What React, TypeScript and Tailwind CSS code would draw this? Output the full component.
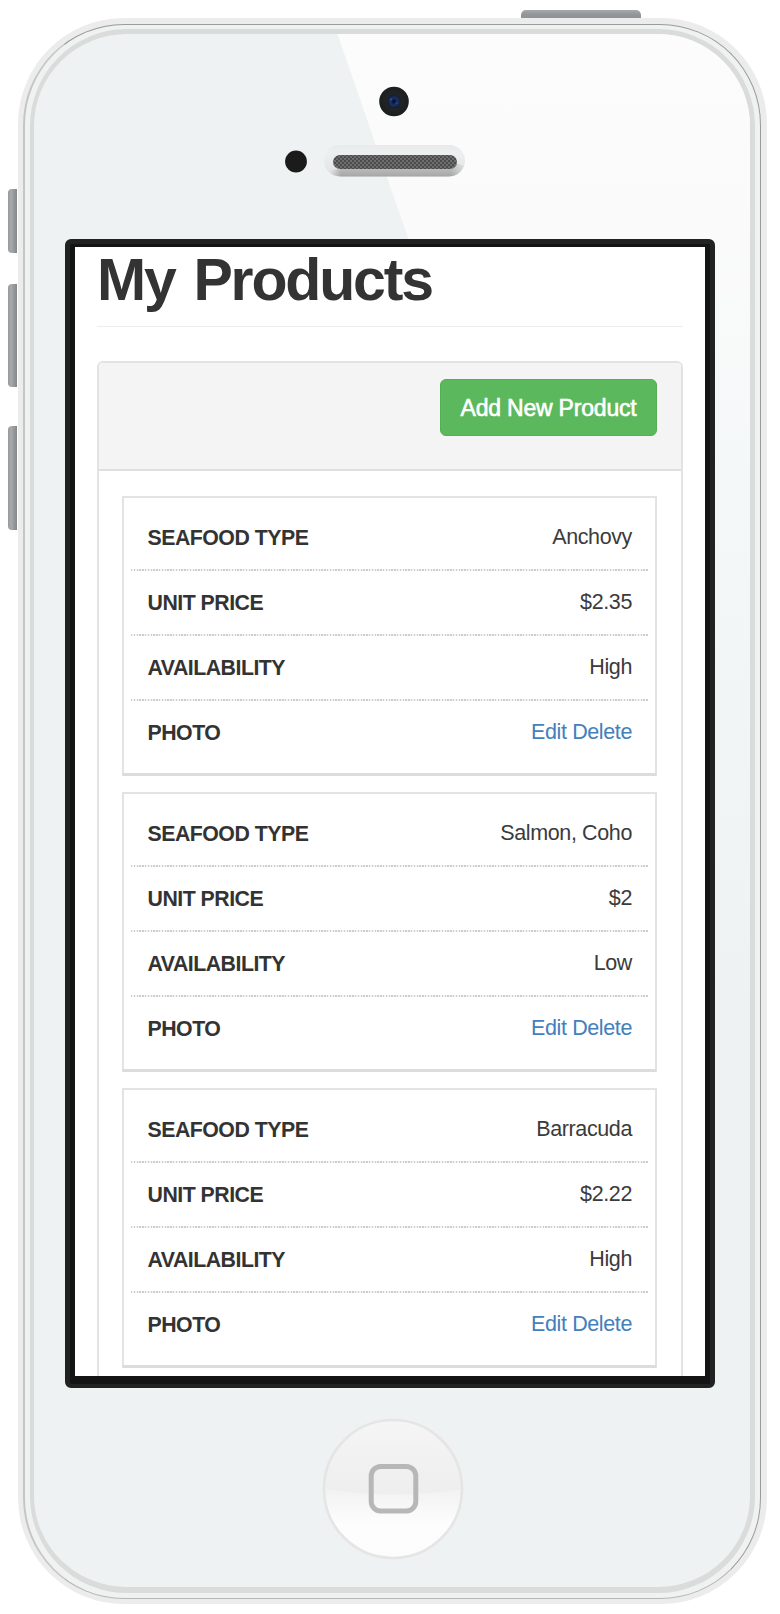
import type { ReactNode } from "react";

type Product = { type: string; price: string; availability: string };

const products: Product[] = [
  { type: "Anchovy", price: "$2.35", availability: "High" },
  { type: "Salmon, Coho", price: "$2", availability: "Low" },
  { type: "Barracuda", price: "$2.22", availability: "High" },
];

function Row({ label, last = false, children }: { label: string; last?: boolean; children: ReactNode }) {
  return (
    <div className="h-[65px]">
      <div className="flex h-[63px] items-center justify-between pt-px pr-4 pl-[16.5px]">
        <span className="pt-0.5 text-[21.3px] font-bold tracking-[-0.5px]">{label}</span>
        <span className="text-[21.5px] tracking-[-0.38px] text-[#3b3b3b]">{children}</span>
      </div>
      {!last && (
        <div className="h-0.5 bg-[repeating-linear-gradient(90deg,#cdcdcd_0_1.4px,#f4f4f4_1.4px_2.8px)]" />
      )}
    </div>
  );
}

function ProductCard({ product }: { product: Product }) {
  return (
    <div className="h-[280px] shrink-0 border-2 border-b-[3px] border-[#e3e3e3] border-b-[#dcdcdc] px-[7px] pt-2">
      <Row label="SEAFOOD TYPE">{product.type}</Row>
      <Row label="UNIT PRICE">{product.price}</Row>
      <Row label="AVAILABILITY">{product.availability}</Row>
      <Row label="PHOTO" last>
        <span className="text-[#4480bb]">
          <a>Edit</a> <a>Delete</a>
        </span>
      </Row>
    </div>
  );
}

function Screen() {
  return (
    <div className="h-[1129px] overflow-hidden bg-white pr-[22px] pl-[22px] text-[#333]">
      <header className="h-[80px] border-b-[1.5px] border-[#ededed] pt-px">
        <h1 className="text-[59px] leading-[64px] font-bold tracking-[-2.15px] whitespace-nowrap [word-spacing:4.5px]">
          My Products
        </h1>
      </header>
      <section className="mt-[34px] h-[1040px] rounded-t-md border-2 border-[#e3e3e3]">
        <div className="flex h-[108px] justify-end rounded-t border-b-2 border-[#dfdfdf] bg-[#f4f4f4] pt-4 pr-6">
          <button className="h-[57px] w-[217px] rounded-md border border-[#55ad55] bg-[#5cb85c] pt-px text-[23px] tracking-[-0.2px] whitespace-nowrap text-white [-webkit-text-stroke:0.6px_white]">
            Add New Product
          </button>
        </div>
        <div className="flex flex-col gap-4 pt-[24.5px] pr-6 pl-[23px]">
          {products.map((p) => (
            <ProductCard key={p.type} product={p} />
          ))}
        </div>
      </section>
    </div>
  );
}

function TopSensors() {
  return (
    <svg className="block h-[205px] w-full" viewBox="34 34 716 205">
      <defs>
        <radialGradient id="lens">
          <stop offset="0" stopColor="#050b1c" />
          <stop offset="0.12" stopColor="#0d1d45" />
          <stop offset="0.26" stopColor="#193468" />
          <stop offset="0.4" stopColor="#172036" />
          <stop offset="0.54" stopColor="#222324" />
          <stop offset="1" stopColor="#1a1f1f" />
        </radialGradient>
        <linearGradient id="housing" x1="0" y1="0" x2="0" y2="1">
          <stop offset="0" stopColor="#e8eaea" />
          <stop offset="0.25" stopColor="#edf0f0" />
          <stop offset="0.6" stopColor="#e8eaea" />
          <stop offset="1" stopColor="#dfe1e1" />
        </linearGradient>
        <linearGradient id="lip" x1="0" y1="0" x2="0" y2="1">
          <stop offset="0" stopColor="#c9c9c9" />
          <stop offset="1" stopColor="#a6a6a6" />
        </linearGradient>
        <linearGradient id="lipFade" x1="0" y1="0" x2="1" y2="0">
          <stop offset="0.04" stopColor="#fff" stopOpacity="0" />
          <stop offset="0.12" stopColor="#fff" />
          <stop offset="0.9" stopColor="#fff" />
          <stop offset="1" stopColor="#fff" stopOpacity="0.2" />
        </linearGradient>
        <mask id="lipMask">
          <rect x="324" y="145" width="141" height="32" fill="url(#lipFade)" />
        </mask>
        <pattern id="mesh" width="4" height="4" patternUnits="userSpaceOnUse">
          <rect width="4" height="4" fill="#6e6e6e" />
          <path d="M0 0h2v2H0zM2 2h2v2H2z" fill="#4c4c4c" />
        </pattern>
      </defs>
      <circle cx="394" cy="101.5" r="14.8" fill="url(#lens)" />
      <circle cx="391" cy="99.5" r="1.3" fill="#2d55a8" opacity="0.7" />
      <circle cx="396.5" cy="103" r="1.3" fill="#2d55a8" opacity="0.5" />
      <circle cx="296" cy="161.5" r="10.9" fill="#1b1b1b" />
      <rect x="324" y="145" width="141" height="31.5" rx="15.7" fill="url(#housing)" />
      <path
        d="M328 170 Q332 176.5 341 176.5 H449 Q459 176.5 464 166 L456 163 Q454 169 449 169 H341 Z"
        fill="url(#lip)"
        mask="url(#lipMask)"
      />
      <rect x="333" y="155" width="124" height="14" rx="7" fill="url(#mesh)" />
    </svg>
  );
}

function HomeButton() {
  return (
    <svg className="block size-[142px]" viewBox="322.5 1418 142 142">
      <defs>
        <linearGradient id="homeBottom" x1="0" y1="0" x2="0" y2="1">
          <stop offset="0.5" stopColor="#f2f2f2" />
          <stop offset="0.76" stopColor="#fdfdfd" />
          <stop offset="1" stopColor="#fcfcfc" />
        </linearGradient>
        <linearGradient id="homeTop" x1="0" y1="0" x2="0" y2="1">
          <stop offset="0" stopColor="#f5f5f5" />
          <stop offset="1" stopColor="#eeeeee" />
        </linearGradient>
      </defs>
      <circle cx="393.5" cy="1489" r="69" fill="url(#homeBottom)" />
      <path d="M324.5 1489a69 69 0 0 1 138 0Q393.5 1500 324.5 1489Z" fill="url(#homeTop)" />
      <circle cx="393.5" cy="1489" r="69" fill="none" stroke="#e6e5e5" strokeWidth="2.6" />
      <rect x="371.7" y="1466.5" width="44.6" height="44.6" rx="9.5" fill="none" stroke="#b7b7b7" strokeWidth="5" />
    </svg>
  );
}

function Glare() {
  return (
    <svg className="absolute inset-0 size-full" viewBox="34 34 716 1553">
      <defs>
        <linearGradient id="glare" gradientUnits="userSpaceOnUse" x1="0" y1="34" x2="0" y2="1000">
          <stop offset="0" stopColor="#fcfcfc" />
          <stop offset="0.22" stopColor="#fafafa" />
          <stop offset="0.45" stopColor="#f5f8f9" />
          <stop offset="1" stopColor="#eef2f3" />
        </linearGradient>
      </defs>
      <path d="M337.5 34H750V1000H671.5Z" fill="url(#glare)" />
    </svg>
  );
}

const sideButton =
  "absolute left-2 w-[9px] rounded-l-[4px] bg-[linear-gradient(90deg,#97999b_0,#a9aaab_35%,#999b9d_60%,#84878a_100%)]";

export default function App() {
  return (
    <div className="relative h-[1614px] w-[780px] overflow-hidden bg-white pt-[18px] pl-[18px] font-['Liberation_Sans',Arial,sans-serif]">
      <div className={sideButton + " top-[189px] h-[64px]"} />
      <div className={sideButton + " top-[284px] h-[103px]"} />
      <div className={sideButton + " top-[426px] h-[104px]"} />
      <div className="absolute top-[10px] left-[521px] h-2 w-[120px] rounded-t-[5px] bg-[linear-gradient(180deg,#a6aaad,#93979a_50%,#8e9296)]" />

      <div className="h-[1586px] w-[749px] rounded-[106px] bg-[#ececec] pt-1.5 pr-1.5 pb-[5px] pl-[5px]">
        <div className="h-full rounded-[101px] border border-l-2 border-[#999c9b] border-b-[#b5b7b6] border-l-[#c4c6c5] bg-[#f0f2f1] pt-1 pr-[5px] pb-[5px] pl-[5px]">
          <div className="h-full rounded-[97px] border-[5px] border-b-[6px] border-l-[4px] border-[#d9dcdb] bg-[#eef2f3]">
            <div className="relative flex h-full flex-col items-center overflow-hidden rounded-[92px]">
              <Glare />
              <div className="relative w-full">
                <TopSensors />
              </div>
              <div className="relative -ml-[4px] h-[1148.5px] w-[650px] shrink-0 rounded-md border-[5px] border-b-[4.5px] border-[#212222] bg-[#141414] px-[5px] pt-[3px] pb-[7px]">
                <Screen />
              </div>
              <div className="relative mt-[30.5px] ml-0.5">
                <HomeButton />
              </div>
            </div>
          </div>
        </div>
      </div>
    </div>
  );
}
